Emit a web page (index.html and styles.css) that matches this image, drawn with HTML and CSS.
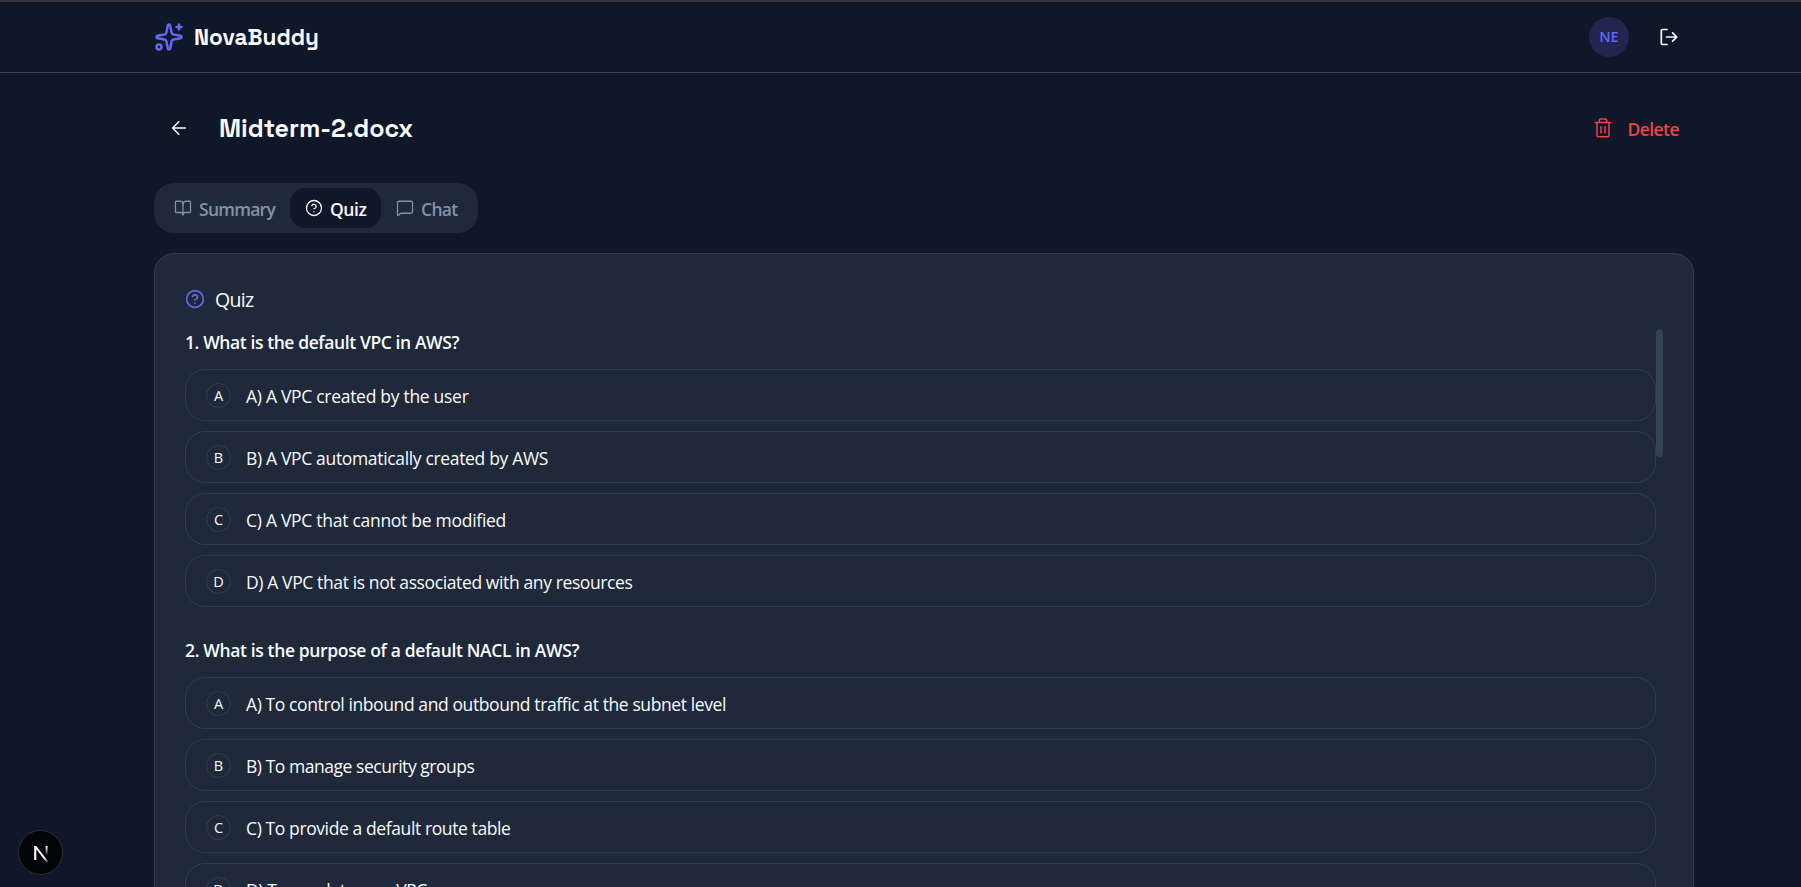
FILE: index.html
```html
<!DOCTYPE html>
<html lang="en">
<head>
<meta charset="utf-8">
<title>NovaBuddy</title>
<link rel="stylesheet" href="styles.css">
</head>
<body>
<header class="topbar">
  <div class="container topbar-inner">
    <a class="brand">
      <svg class="icon brand-icon" viewBox="0 0 24 24"><path d="M11.017 2.814a1 1 0 0 1 1.966 0l1.051 5.558a2 2 0 0 0 1.594 1.594l5.558 1.051a1 1 0 0 1 0 1.966l-5.558 1.051a2 2 0 0 0-1.594 1.594l-1.051 5.558a1 1 0 0 1-1.966 0l-1.051-5.558a2 2 0 0 0-1.594-1.594l-5.558-1.051a1 1 0 0 1 0-1.966l5.558-1.051a2 2 0 0 0 1.594-1.594z"/><path d="M20 2v4M22 4h-4"/><circle cx="4" cy="20" r="2"/></svg>
      <span class="brand-name">NovaBuddy</span>
    </a>
    <div class="account">
      <span class="avatar">NE</span>
      <button class="icon-button"><svg class="icon logout-icon" viewBox="0 0 20 20"><path d="M8 2.500H3.600q-1.300 0-1.300 1.300v12.400q0 1.300 1.300 1.300H8M7.500 10h10.200M13.600 5.800 17.800 10l-4.200 4.200"/></svg></button>
    </div>
  </div>
</header>
<main class="container">
  <div class="heading">
    <svg class="icon back-icon" viewBox="0 0 16 16"><path d="M14.300 8H1.700M7.800 1.800 1.600 8l6.200 6.200"/></svg>
    <h1 class="title">Midterm-2.docx</h1>
    <button class="delete"><svg class="icon trash-icon" viewBox="0 0 18 20"><path d="M1 4.600h16M3 4.600v12.600q0 1.600 1.600 1.600h8.800q1.600 0 1.600-1.600V4.600M5.300 4.400V2.600Q5.300 1 6.900 1h4.200q1.600 0 1.600 1.600v1.800M7 8.700v6M11 8.700v6"/></svg><span class="delete-label fit" data-w="51.500">Delete</span></button>
  </div>
  <nav class="tabs">
    <button class="tab tab-summary"><svg class="icon tab-icon" viewBox="0 0 24 24"><path d="M12 7v14"/><path d="M3 18a1 1 0 0 1-1-1V4a1 1 0 0 1 1-1h5a4 4 0 0 1 4 4 4 4 0 0 1 4-4h5a1 1 0 0 1 1 1v13a1 1 0 0 1-1 1h-6a3 3 0 0 0-3 3 3 3 0 0 0-3-3z"/></svg><span class="tab-label fit" data-w="76">Summary</span></button>
    <button class="tab tab-quiz active"><svg class="icon tab-icon" viewBox="0 0 24 24"><circle cx="12" cy="12" r="10"/><path d="M9.090 9a3 3 0 0 1 5.830 1c0 2-3 3-3 3M12 17h.01"/></svg><span class="tab-label fit" data-w="36.500">Quiz</span></button>
    <button class="tab tab-chat"><svg class="icon tab-icon" viewBox="0 0 24 24"><path d="M22 17a2 2 0 0 1-2 2H6.800a2 2 0 0 0-1.400.6l-2.200 2.200A.7.7 0 0 1 2 21.300V5a2 2 0 0 1 2-2h16a2 2 0 0 1 2 2z"/></svg><span class="tab-label fit" data-w="36.500">Chat</span></button>
  </nav>
  <section class="card">
    <h2 class="card-title"><svg class="icon card-icon" viewBox="0 0 24 24"><circle cx="12" cy="12" r="10"/><path d="M9.090 9a3 3 0 0 1 5.830 1c0 2-3 3-3 3M12 17h.01"/></svg><span class="card-label fit" data-w="38.500">Quiz</span></h2>
    <div class="scroll-area">
      <div class="question">
        <h3 class="prompt"><span class="fit" data-w="274">1. What is the default VPC in AWS?</span></h3>
        <div class="option"><span class="letter">A</span><span class="fit" data-w="222.500">A) A VPC created by the user</span></div>
        <div class="option"><span class="letter">B</span><span class="fit" data-w="302">B) A VPC automatically created by AWS</span></div>
        <div class="option"><span class="letter">C</span><span class="fit" data-w="260">C) A VPC that cannot be modified</span></div>
        <div class="option"><span class="letter">D</span><span class="fit" data-w="386.500">D) A VPC that is not associated with any resources</span></div>
      </div>
      <div class="question">
        <h3 class="prompt"><span class="fit" data-w="394">2. What is the purpose of a default NACL in AWS?</span></h3>
        <div class="option"><span class="letter">A</span><span class="fit" data-w="480">A) To control inbound and outbound traffic at the subnet level</span></div>
        <div class="option"><span class="letter">B</span><span class="fit" data-w="228.500">B) To manage security groups</span></div>
        <div class="option"><span class="letter">C</span><span class="fit" data-w="264.500">C) To provide a default route table</span></div>
        <div class="option"><span class="letter">D</span><span class="fit" data-w="181">D) To regulate new VPC</span></div>
      </div>
      <span class="thumb"></span>
    </div>
  </section>
</main>
<div class="dev-badge"><svg class="dev-icon" viewBox="0 0 20 20"><defs><linearGradient id="diagonal" x1="0" y1="0" x2="1" y2="1"><stop offset=".7" stop-color="#fff"/><stop offset="1" stop-color="#fff" stop-opacity=".1"/></linearGradient><linearGradient id="stem" x1="0" y1="0" x2="0" y2="1"><stop offset="0" stop-color="#fff"/><stop offset="1" stop-color="#fff" stop-opacity="0"/></linearGradient></defs><path d="M3.200 17V3h2.100l12 15.500-1.600 1.200L5.300 6.300V17z" fill="url(#diagonal)"/><path d="M14.600 3h2v10h-2z" fill="url(#stem)"/></svg></div>
<script src="fit.js"></script>
</body>
</html>
```
FILE: styles.css
```css
* { box-sizing: border-box; margin: 0; padding: 0; }
html, body { height: 100%; overflow: hidden; }
body { background: #0f1729; color: #f8fafc; font-family: "Segoe UI", "Open Sans", "Noto Sans", sans-serif; font-size: 18px; }
button { border: 0; background: none; color: inherit; font: inherit; }
.container { width: 1540px; margin-left: 154px; }
.icon { display: block; flex: none; fill: none; stroke: currentColor; stroke-width: 2; stroke-linecap: round; stroke-linejoin: round; }
.topbar { height: 73px; border-top: 2px solid #38373d; border-bottom: 1px solid #344256; }
.topbar-inner { display: flex; align-items: center; justify-content: space-between; height: 70px; }
.brand { display: flex; align-items: center; gap: 10px; }
.brand-icon { width: 30px; height: 30px; color: #6467f2; }
.brand-name { padding-top: 2px; font-family: "Space Grotesk", "Lato", sans-serif; font-size: 22.500px; font-weight: 700; line-height: 30px; }
.account { display: flex; align-items: center; gap: 30px; padding-right: 15px; }
.avatar { width: 40px; height: 40px; border-radius: 50%; background: #20264f; color: #6467f2; font-size: 14.500px; font-weight: 600; line-height: 40px; text-align: center; }
.logout-icon { width: 20px; height: 20px; stroke-width: 1.700; }
.heading { display: flex; align-items: center; height: 40px; margin-top: 35px; padding: 0 15px 0 17px; }
.back-icon { width: 16px; height: 16px; stroke-width: 1.500; }
.title { margin-left: 32px; font-family: "Space Grotesk", "Lato", sans-serif; font-size: 25px; font-weight: 700; line-height: 36px; padding-bottom: 1px; }
.delete { display: flex; align-items: center; gap: 16px; margin-left: auto; color: #ef4343; }
.trash-icon { width: 18px; height: 20px; stroke-width: 1.500; }
.delete-label { font-weight: 600; line-height: 24px; font-size: 17.500px; padding-top: 2px; }
.tabs { display: flex; width: 324px; height: 50px; margin-top: 35px; padding: 5px; border-radius: 20px; background: #1f293a; color: #8193ab; }
.tab { display: flex; align-items: center; height: 40px; gap: 7px; padding-left: 15px; border-radius: 15px; }
.tab-summary { width: 131px; }
.tab-quiz { width: 91px; }
.tab-chat { width: 92px; }
.tab.active { background: #0f1729; color: #f8fafc; }
.tab-icon { width: 18px; height: 18px; stroke-width: 1.700; margin-top: -1px; }
.tab-label { font-size: 17.500px; font-weight: 600; line-height: 24px; padding-top: 1px; }
.card { height: 700px; margin-top: 20px; padding: 30px; border: 1px solid #304052; border-radius: 20px; background: #1f293a; }
.card-title { display: flex; align-items: center; gap: 10px; height: 32px; font-size: 19.500px; font-weight: 400; line-height: 28px; }
.card-icon { width: 20px; height: 20px; margin-top: -2px; color: #6467f2; }
.scroll-area { position: relative; width: 1478px; height: 640px; margin-top: 13px; padding-right: 7px; }
.thumb { position: absolute; top: 0; right: 0; width: 7px; height: 128px; border-radius: 4px; background: #344256; }
.question { display: grid; gap: 10px; margin-bottom: 30px; }
.prompt { height: 30px; font-size: 17.500px; font-weight: 600; line-height: 27px; white-space: nowrap; }
.option { display: flex; align-items: center; height: 52px; gap: 15px; padding-left: 20px; border: 1px solid #304052; border-radius: 20px; font-size: 17.500px; line-height: 28px; white-space: nowrap; }
.option .fit { padding-top: 2px; }
.letter { flex: none; width: 25px; height: 25px; border: 1px solid #304052; border-radius: 50%; font-size: 14.500px; line-height: 23px; text-align: center; }
.dev-badge { position: fixed; left: 18px; bottom: 12px; display: grid; place-items: center; width: 45px; height: 45px; border: 1px solid #302f33; border-radius: 50%; background: #030407; }
.dev-icon { width: 20px; height: 20px; }
```
FILE: fit.js
```js
// Tune tracking so each line keeps its intended measure.
document.querySelectorAll('.fit[data-w]').forEach(function (el) {
  var n = el.textContent.length;
  var w = el.getBoundingClientRect().width;
  el.style.letterSpacing = ((+el.dataset.w - w) / n) + 'px';
});
```
